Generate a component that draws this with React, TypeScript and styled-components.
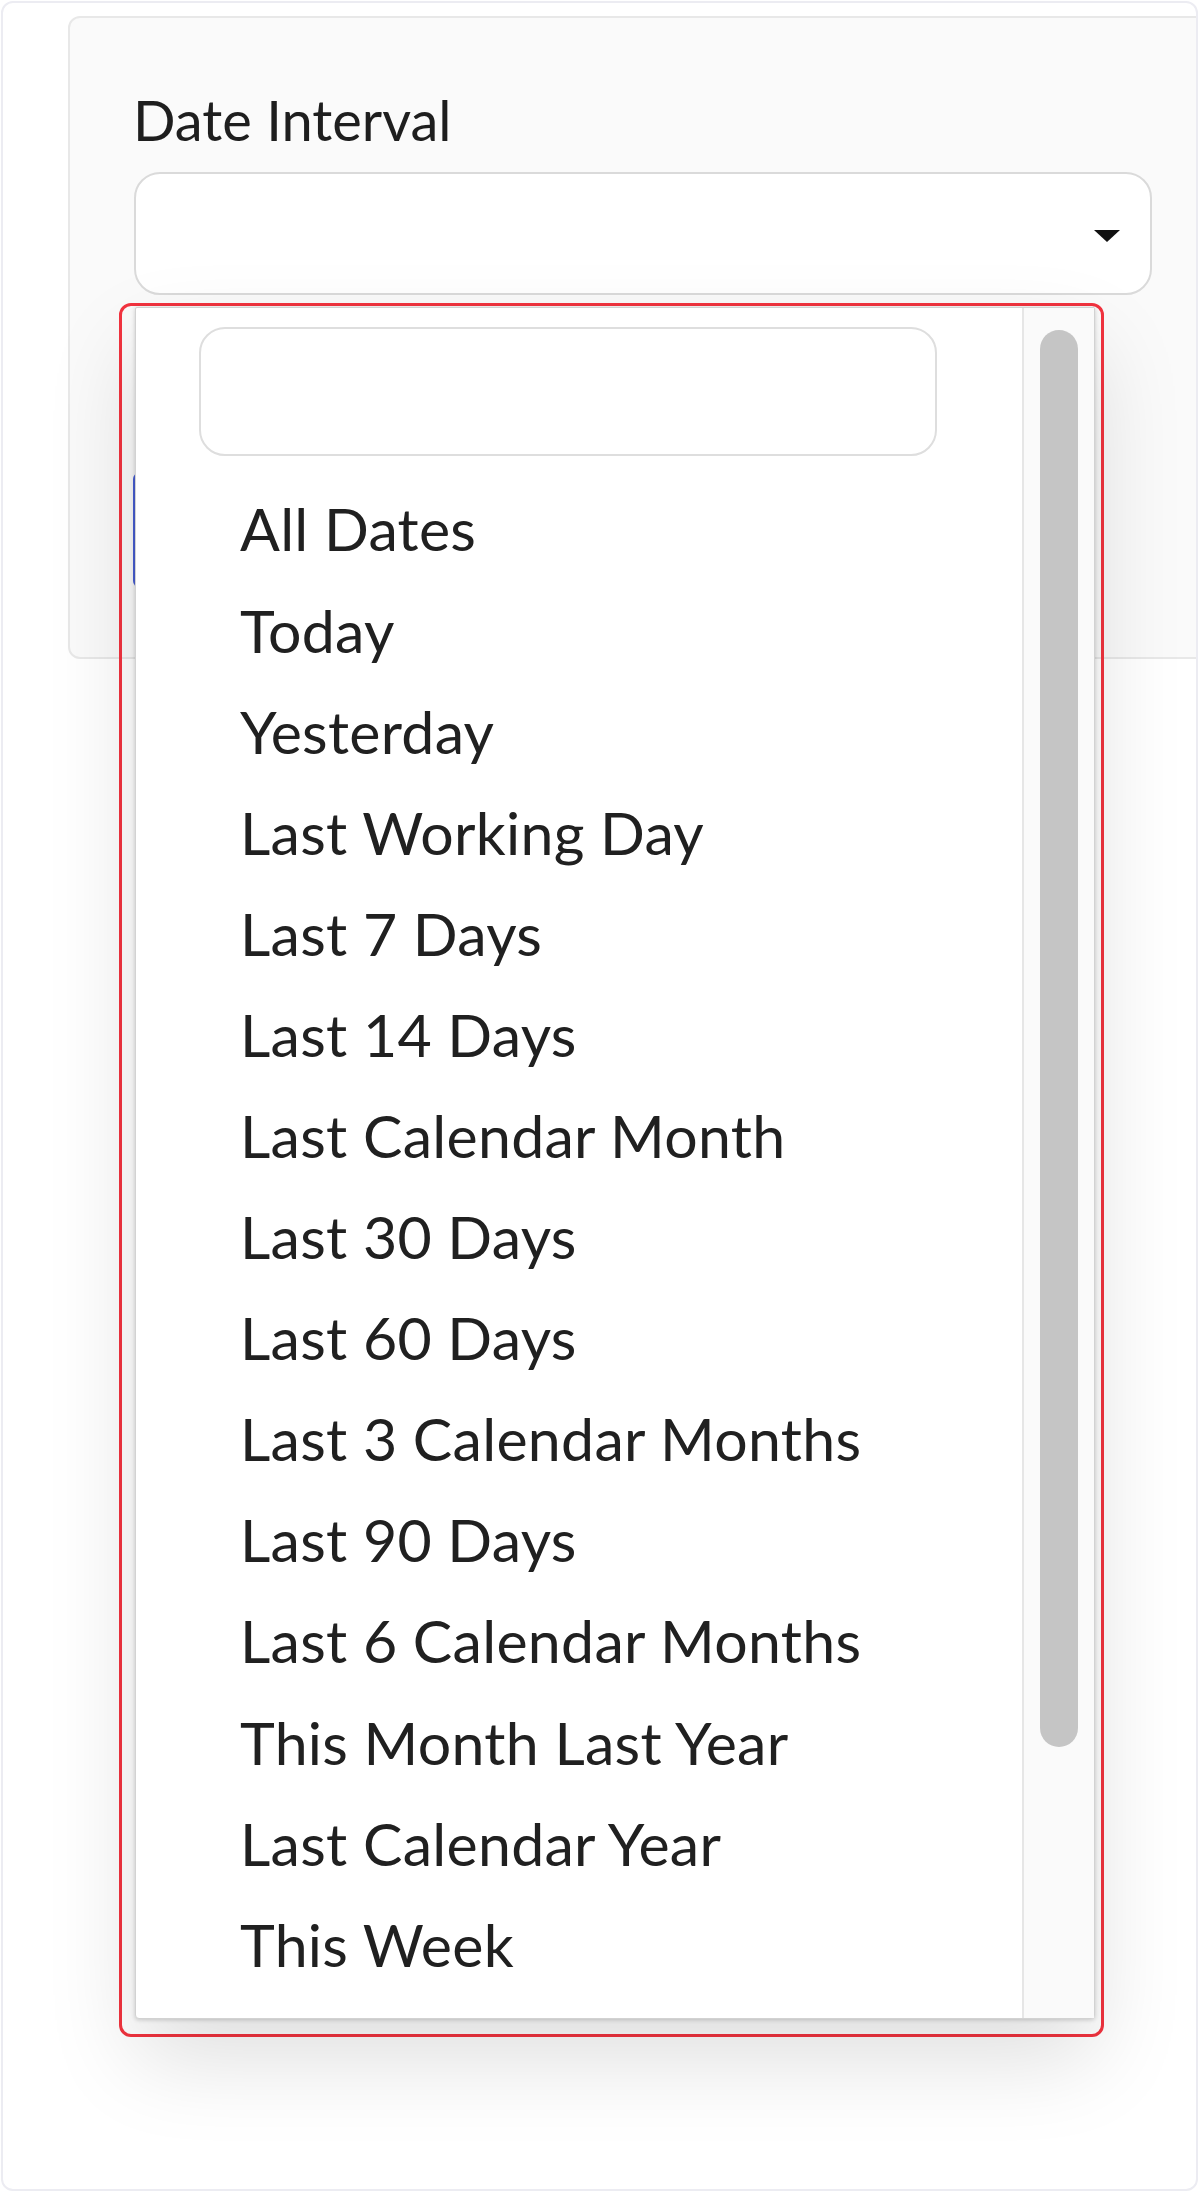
import React from "react";
import styled, { createGlobalStyle } from "styled-components";

const GlobalStyle = createGlobalStyle`
  html, body {
    margin: 0;
    padding: 0;
    background: #ffffff;
  }
  body {
    font-family: "Lato", "Liberation Sans", sans-serif;
  }
  * {
    box-sizing: border-box;
  }
`;

const options = [
  "All Dates",
  "Today",
  "Yesterday",
  "Last Working Day",
  "Last 7 Days",
  "Last 14 Days",
  "Last Calendar Month",
  "Last 30 Days",
  "Last 60 Days",
  "Last 3 Calendar Months",
  "Last 90 Days",
  "Last 6 Calendar Months",
  "This Month Last Year",
  "Last Calendar Year",
  "This Week",
];

const App = () => {
  return (
    <>
      <GlobalStyle />
      <Frame>
        <Card>
          <Label>Date Interval</Label>
          <Field>
            <Select>
              <Caret />
            </Select>
            <Highlight>
              <Panel>
                <ListArea>
                  <Search />
                  <OptionList>
                    {options.map((item) => (
                      <Option key={item}>{item}</Option>
                    ))}
                  </OptionList>
                </ListArea>
                <Track>
                  <Thumb />
                </Track>
              </Panel>
            </Highlight>
          </Field>
          <ApplyButton />
        </Card>
      </Frame>
    </>
  );
};

const Frame = styled.div`
  position: relative;
  margin: 1px 2px 1px 1px;
  height: 2190px;
  border: 2px solid #ececf2;
  border-radius: 12px;
  overflow: hidden;
  background: #fff;
`;

const Card = styled.div`
  display: flex;
  flex-direction: column;
  align-items: flex-start;
  margin: 13px -20px 0 65px;
  padding: 68px 0 70px 64px;
  background: #fafafa;
  border: 2px solid #e8e8e8;
  border-radius: 12px;
`;

const Label = styled.div`
  margin-left: -1px;
  font-size: 56px;
  line-height: 68.4px;
  color: #1e1e1e;
`;

const Field = styled.div`
  position: relative;
  margin-top: 18px;
  width: 1018px;
`;

const Select = styled.div`
  display: flex;
  align-items: center;
  justify-content: flex-end;
  height: 123px;
  padding-right: 30px;
  background: #fff;
  border: 2px solid #dadada;
  border-radius: 26px;
`;

const Caret = styled.span`
  width: 0;
  height: 0;
  border-left: 13px solid transparent;
  border-right: 13px solid transparent;
  border-top: 12px solid #111;
  margin-top: 4px;
`;

const Highlight = styled.div`
  position: absolute;
  z-index: 5;
  top: calc(100% + 8px);
  left: -15px;
  width: 985px;
  height: 1734px;
  padding: 1px 6px 15px 13px;
  border: 3px solid #f2333f;
  border-radius: 12px;
`;

const Panel = styled.div`
  display: flex;
  height: 100%;
  background: #fff;
  border: 1px solid #d2d2d2;
  border-radius: 2px 2px 4px 4px;
  box-shadow: 0 1px 4px rgba(0, 0, 0, 0.18), 0 40px 90px rgba(0, 0, 0, 0.13);
`;

const ListArea = styled.div`
  flex: 1;
  padding: 19px 0 0 63px;
`;

const Search = styled.div`
  width: 738px;
  height: 129px;
  background: #fff;
  border: 2px solid #dedede;
  border-radius: 26px;
`;

const OptionList = styled.ul`
  list-style: none;
  margin: 22px 0 0;
  padding: 0 0 0 41px;
`;

const Option = styled.li`
  font-size: 59px;
  letter-spacing: 0.3px;
  line-height: 101.1px;
  color: #202020;
  white-space: nowrap;
`;

const Track = styled.div`
  width: 72px;
  padding: 22px 0 0 16px;
  background: #fafafa;
  border-left: 2px solid #e6e6e6;
`;

const Thumb = styled.div`
  width: 38px;
  height: 1417px;
  background: #c5c5c5;
  border-radius: 19px;
`;

const ApplyButton = styled.div`
  margin: 178px 0 0 -1px;
  width: 320px;
  height: 114px;
  background: #4a61d9;
  border-radius: 6px;
`;

export default App;
